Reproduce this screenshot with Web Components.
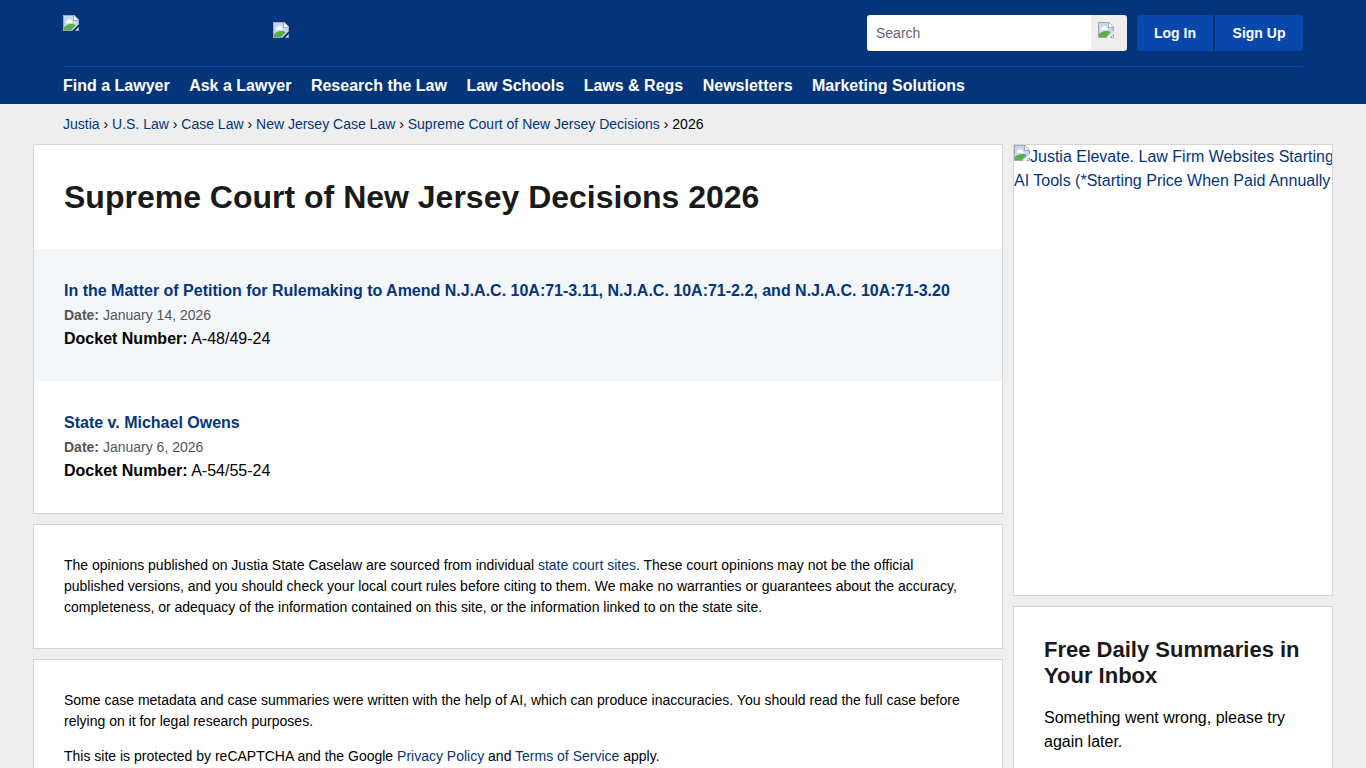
<!DOCTYPE html>
<html lang="en">
<head>
<meta charset="UTF-8">
<meta name="viewport" content="width=device-width, initial-scale=1.0">
<title>Supreme Court of New Jersey Decisions 2026</title>
<style>
    body {
        margin: 0;
        background: #eee;
        color: #000;
        font: 16px/24px "Liberation Sans", Arial, sans-serif;
        --brand: #04357a;
        --button: #0848ad;
        --link: #04357a;
        --line: #d5d5d5;
    }
    a {
        color: var(--link);
        text-decoration: none;
    }
    main {
        display: grid;
        grid-template-columns: minmax(0, 1fr) 320px;
        gap: 10px;
        max-width: 1300px;
        margin: 0 auto;
    }
    .column {
        display: flex;
        flex-direction: column;
        gap: 10px;
    }
</style>
</head>
<body>
<site-header></site-header>
<bread-crumbs current="2026">
    <a href="#">Justia</a>
    <a href="#">U.S. Law</a>
    <a href="#">Case Law</a>
    <a href="#">New Jersey Case Law</a>
    <a href="#">Supreme Court of New Jersey Decisions</a>
</bread-crumbs>
<main>
    <div class="column">
        <case-list heading="Supreme Court of New Jersey Decisions 2026">
            <case-item date="January 14, 2026" docket="A-48/49-24">In the Matter of Petition for Rulemaking to Amend N.J.A.C. 10A:71-3.11, N.J.A.C. 10A:71-2.2, and N.J.A.C. 10A:71-3.20</case-item>
            <case-item date="January 6, 2026" docket="A-54/55-24">State v. Michael Owens</case-item>
        </case-list>
        <note-card>
            <p>The opinions published on Justia State Caselaw are sourced from individual <a href="#">state court sites</a>. These court opinions may not be the official published versions, and you should check your local court rules before citing to them. We make no warranties or guarantees about the accuracy, completeness, or adequacy of the information contained on this site, or the information linked to on the state site.</p>
        </note-card>
        <note-card>
            <p>Some case metadata and case summaries were written with the help of AI, which can produce inaccuracies. You should read the full case before relying on it for legal research purposes.</p>
            <p>This site is protected by reCAPTCHA and the Google <a href="#">Privacy Policy</a> and <a href="#">Terms of Service</a> apply.</p>
        </note-card>
    </div>
    <div class="column">
        <promo-card>Justia Elevate. Law Firm Websites Starting<br>AI Tools (*Starting Price When Paid Annually</promo-card>
        <summary-card heading="Free Daily Summaries in Your Inbox">Something went wrong, please try again later.</summary-card>
    </div>
</main>

<script>
    // Placeholder shown where a picture could not be loaded
    class MissingImage extends HTMLElement {
        constructor() {
            super();
            this.attachShadow({ mode: 'open' });
        }

        connectedCallback() {
            this.shadowRoot.innerHTML = `
                <style>
                    :host { display: inline-block; width: 16px; height: 16px; }
                    svg { display: block; }
                </style>
                <svg width="16" height="16" viewBox="0 0 16 16" aria-hidden="true">
                    <path fill="#c6d8f3" d="M0 0h11l5 5v4l-7 7H0z"/>
                    <path fill="#fff" d="M3 7c0-1.500 1-2 2-2 1-1.500 3-1 3 .5 1.500 0 1.500 1.500 1 2.500H3z"/>
                    <path fill="#5aad4a" d="M1 15v-3c2-2 5-3.500 8-3 2 0 3 .5 3.500 1.500L8 15z"/>
                    <path fill="#fff" d="M11 0l5 5h-5z"/>
                    <path fill="none" stroke="#a3a7ad" d="M9 15.500H.5V.5h10.500l4.500 4.500v4M10.500 .5V5.500H15.500"/>
                    <path fill="#fff" stroke="#a3a7ad" d="M15.500 12.500v3h-3z"/>
                </svg>
            `;
        }
    }

    class SiteHeader extends HTMLElement {
        constructor() {
            super();
            this.attachShadow({ mode: 'open' });
        }

        connectedCallback() {
            const links = ['Find a Lawyer', 'Ask a Lawyer', 'Research the Law', 'Law Schools', 'Laws & Regs', 'Newsletters', 'Marketing Solutions'];
            const linksHTML = links.map(text => `<a href="#">${text.replace('&', '&amp;')}</a>`).join(' ');

            this.shadowRoot.innerHTML = `
                <style>
                    :host { display: block; background: var(--brand); color: #fff; }
                    header { max-width: 1240px; margin: 0 auto; padding: 15px 30px 0; }
                    .top { display: flex; gap: 10px; padding-bottom: 15px; }
                    .logo { flex: 0 0 200px; line-height: 0; }
                    .tagline { flex: 1; padding-top: 7px; line-height: 0; }
                    form {
                        display: flex;
                        width: 260px;
                        height: 36px;
                        border-radius: 3px;
                        overflow: hidden;
                    }
                    input {
                        flex: 1;
                        min-width: 0;
                        padding: 0 9px;
                        border: 0;
                        background: #fff;
                        font: 14px/20px "Liberation Sans", Arial, sans-serif;
                    }
                    input::placeholder { color: #5f6672; }
                    form button {
                        width: 36px;
                        padding: 7px;
                        border: 0;
                        background: #eee;
                        text-align: left;
                        line-height: 0;
                    }
                    form missing-image { display: block; height: 22px; }
                    .account { display: grid; grid-template-columns: 76px 88px; gap: 2px; }
                    .account a {
                        background: var(--button);
                        font-size: 14px;
                        line-height: 36px;
                        text-align: center;
                    }
                    .account a:first-child { border-radius: 3px 0 0 3px; }
                    .account a:last-child { border-radius: 0 3px 3px 0; }
                    a { color: #fff; font-weight: bold; text-decoration: none; }
                    nav { padding: 7px 0 6px; border-top: 1px solid #0848ad; }
                    nav a { margin-right: 15px; }
                </style>
                <header>
                    <div class="top">
                        <a class="logo" href="#" aria-label="Justia"><missing-image></missing-image></a>
                        <div class="tagline"><missing-image></missing-image></div>
                        <form>
                            <input type="text" placeholder="Search" aria-label="Search">
                            <button type="button" aria-label="Search"><missing-image></missing-image></button>
                        </form>
                        <div class="account"><a href="#">Log In</a><a href="#">Sign Up</a></div>
                    </div>
                    <nav>${linksHTML}</nav>
                </header>
            `;
        }
    }

    class BreadCrumbs extends HTMLElement {
        constructor() {
            super();
            this.attachShadow({ mode: 'open' });
        }

        connectedCallback() {
            this.shadowRoot.innerHTML = `
                <style>
                    :host { display: block; max-width: 1240px; margin: 0 auto; padding: 10px 30px; font-size: 14px; line-height: 20px; }
                    ::slotted(a)::after { content: " \\203A"; color: #000; }
                </style>
                <nav aria-label="Breadcrumb"><slot></slot> ${this.getAttribute('current')}</nav>
            `;
        }
    }

    class CaseList extends HTMLElement {
        constructor() {
            super();
            this.attachShadow({ mode: 'open' });
        }

        connectedCallback() {
            this.shadowRoot.innerHTML = `
                <style>
                    :host { display: block; border: 1px solid var(--line); background: #fff; }
                    h1 { margin: 0; padding: 30px; color: #1a1a1a; font-size: 32px; line-height: 44px; }
                    ::slotted(case-item:nth-child(odd)) { background: #f3f7fa; }
                </style>
                <h1>${this.getAttribute('heading')}</h1>
                <slot></slot>
            `;
        }
    }

    class CaseItem extends HTMLElement {
        constructor() {
            super();
            this.attachShadow({ mode: 'open' });
        }

        connectedCallback() {
            this.shadowRoot.innerHTML = `
                <style>
                    :host { display: block; padding: 30px; }
                    a { color: var(--link); font-weight: bold; text-decoration: none; }
                    .date { color: #555; font-size: 14px; }
                </style>
                <a href="#"><slot></slot></a>
                <div class="date"><strong>Date:</strong> ${this.getAttribute('date')}</div>
                <div><strong>Docket Number:</strong> ${this.getAttribute('docket')}</div>
            `;
        }
    }

    class NoteCard extends HTMLElement {
        constructor() {
            super();
            this.attachShadow({ mode: 'open' });
        }

        connectedCallback() {
            this.shadowRoot.innerHTML = `
                <style>
                    :host { display: block; padding: 30px; border: 1px solid var(--line); background: #fff; font-size: 14px; line-height: 21px; }
                    ::slotted(p) { margin: 0 0 14px; }
                    ::slotted(p:last-child) { margin-bottom: 0; }
                </style>
                <slot></slot>
            `;
        }
    }

    class PromoCard extends HTMLElement {
        constructor() {
            super();
            this.attachShadow({ mode: 'open' });
        }

        connectedCallback() {
            this.shadowRoot.innerHTML = `
                <style>
                    :host { display: block; min-height: 450px; border: 1px solid var(--line); background: #fff; overflow: hidden; }
                    a { color: var(--link); text-decoration: none; white-space: nowrap; }
                    missing-image { vertical-align: top; }
                </style>
                <a href="#"><missing-image></missing-image><slot></slot></a>
            `;
        }
    }

    class SummaryCard extends HTMLElement {
        constructor() {
            super();
            this.attachShadow({ mode: 'open' });
        }

        connectedCallback() {
            this.shadowRoot.innerHTML = `
                <style>
                    :host { display: block; flex: 1; padding: 30px; border: 1px solid var(--line); background: #fff; }
                    h2 { margin: 0 0 17px; color: #1a1a1a; font-size: 22px; line-height: 26px; }
                    p { margin: 0; }
                </style>
                <h2>${this.getAttribute('heading')}</h2>
                <p><slot></slot></p>
            `;
        }
    }

    customElements.define('missing-image', MissingImage);
    customElements.define('site-header', SiteHeader);
    customElements.define('bread-crumbs', BreadCrumbs);
    customElements.define('case-item', CaseItem);
    customElements.define('case-list', CaseList);
    customElements.define('note-card', NoteCard);
    customElements.define('promo-card', PromoCard);
    customElements.define('summary-card', SummaryCard);
</script>
</body>
</html>
